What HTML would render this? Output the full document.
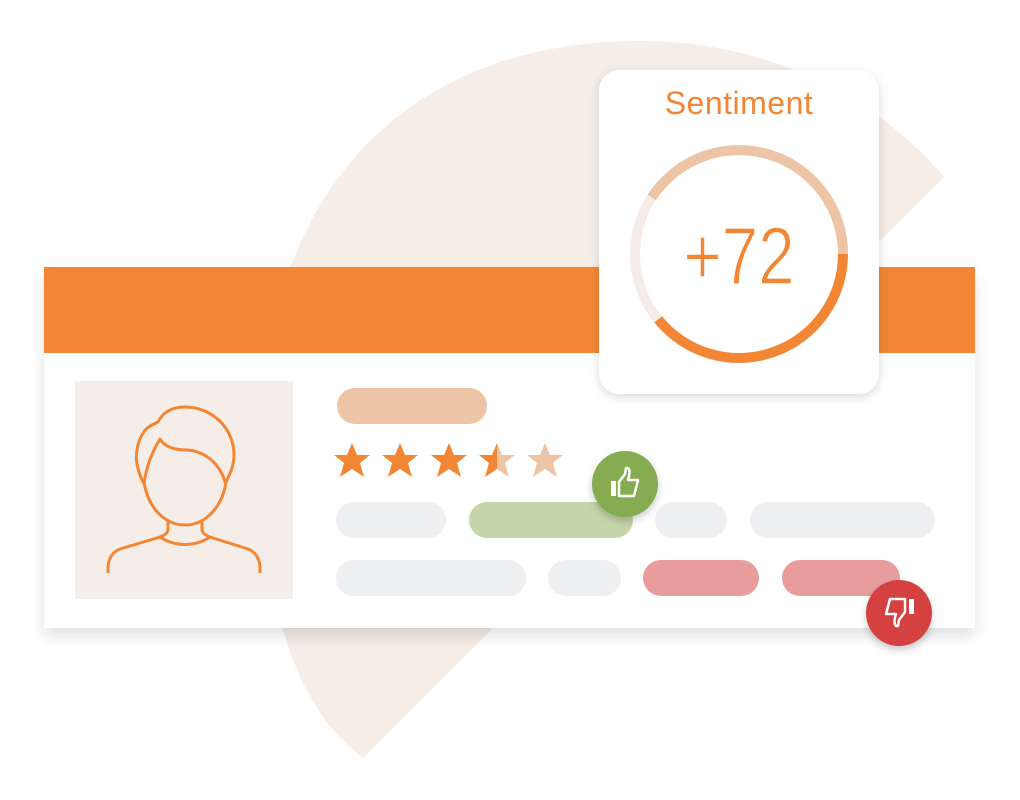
<!DOCTYPE html>
<html><head><meta charset="utf-8"><style>
html,body{margin:0;padding:0;background:#fff;width:1020px;height:800px;overflow:hidden;position:relative;font-family:"Liberation Sans",sans-serif}
.abs{position:absolute}
.pill{position:absolute;height:36px;border-radius:18px}
</style></head><body>
<svg class="abs" style="left:0;top:0" width="1020" height="800">
<path d="M363,758 L944,177 C870,90 760,41 640,41 C400,41 262,200 262,440 C262,620 300,710 363,758 Z" fill="#F6EDE7"/>
</svg>
<div class="abs" style="left:44px;top:267px;width:931px;height:361px;background:#fff;box-shadow:0 8px 14px rgba(0,0,0,0.12)"></div>
<div class="abs" style="left:44px;top:267px;width:931px;height:86px;background:#F28634"></div>
<div class="abs" style="left:75px;top:381px;width:218px;height:218px;background:#F5EDE7"></div>
<svg class="abs" style="left:0;top:0" width="1020" height="800" fill="none" stroke="#F28634" stroke-width="3" stroke-linecap="butt" stroke-linejoin="round">
<path d="M144,484 C138,472 135,460 137,450 C139,437 145,428 152,425 L158,422 C162,414 170,407 185,407 C212,407 234,428 234,455 C234,466 230,474 225,484"/>
<path d="M144,484 C146,468 152,452 160,439 C164,446 172,450 187,450 C205,451 220,464 225,482"/>
<path d="M144,482 C148,508 165,525 185,525 C205,525 222,508 226,482"/>
<path d="M168,521 L168,529 C168,533 165,535 160,537 L120,549 C112,552 108,560 108,568 L108,573"/>
<path d="M202,521 L202,529 C202,533 205,535 210,537 L248,549 C256,552 260,560 260,568 L260,573"/>
<path d="M160,537 C175,547 195,547 210,537"/>
</svg>
<div class="pill" style="left:337px;top:388px;width:150px;background:#EDC4A5"></div>
<svg class="abs" style="left:330px;top:440px" width="250" height="45">
<defs><path id="s" d="M0,-18 L5,-6 L18,-6 L8,2 L12,16 L0,8 L-12,16 L-8,2 L-18,-6 L-5,-6 Z"/>
<path id="hs" d="M0,-18 L0,8 L-12,16 L-8,2 L-18,-6 L-5,-6 Z"/></defs>
<use href="#s" x="22" y="21" fill="#F28634"/>
<use href="#s" x="70" y="21" fill="#F28634"/>
<use href="#s" x="119" y="21" fill="#F28634"/>
<use href="#s" x="167" y="21" fill="#EDC4A5"/>
<use href="#hs" x="167" y="21" fill="#F28634"/>
<use href="#s" x="215" y="21" fill="#EDC4A5"/>
</svg>
<div class="pill" style="left:336px;top:502px;width:110px;background:#EEEFF1"></div>
<div class="pill" style="left:469px;top:502px;width:164px;background:#C4D6A9"></div>
<div class="pill" style="left:655px;top:502px;width:72px;background:#EEEFF1"></div>
<div class="pill" style="left:750px;top:502px;width:185px;background:#EEEFF1"></div>
<div class="pill" style="left:336px;top:560px;width:190px;background:#EEEFF1"></div>
<div class="pill" style="left:548px;top:560px;width:73px;background:#EEEFF1"></div>
<div class="pill" style="left:643px;top:560px;width:116px;background:#E99C9C"></div>
<div class="pill" style="left:782px;top:560px;width:118px;background:#E99C9C"></div>
<div class="abs" style="left:592px;top:451px;width:66px;height:66px;border-radius:50%;background:#86AC52;box-shadow:0 4px 8px rgba(0,0,0,0.2)"></div>
<svg class="abs" style="left:592px;top:451px" width="66" height="66" fill="none" stroke="#fff" stroke-width="2.5" stroke-linejoin="round">
<rect x="19" y="30" width="5" height="15" fill="#fff" stroke="none"/>
<path d="M27,45 L27,31 L33,23 L34,17 L36,17 C38,19 38,23 36,29 L46,29 L42,45 Z"/>
</svg>
<div class="abs" style="left:866px;top:580px;width:66px;height:66px;border-radius:50%;background:#D54040;box-shadow:0 4px 8px rgba(0,0,0,0.2)"></div>
<svg class="abs" style="left:866px;top:580px" width="66" height="66" fill="none" stroke="#fff" stroke-width="2.5" stroke-linejoin="round">
<rect x="43" y="19" width="5" height="15" fill="#fff" stroke="none"/>
<path d="M39,19 L39,32 L33,40 L32,46 L30,46 C28,44 28,40 30,34 L20,34 L24,19 Z"/>
</svg>
<div class="abs" style="left:599px;top:70px;width:280px;height:324px;border-radius:20px;background:#fff;box-shadow:0 3px 10px rgba(0,0,0,0.15)"></div>
<div class="abs" style="left:599px;top:85px;width:280px;text-align:center;font-size:32px;color:#F28634;letter-spacing:0.5px">Sentiment</div>
<svg class="abs" style="left:599px;top:70px" width="280" height="324">
<g transform="translate(140,184)" fill="none" stroke-width="10">
<circle r="104" stroke="#F5ECE7"/>
<path d="M-87.2,-56.6 A104,104 0 0 1 104,0" stroke="#EDC4A5"/>
<path d="M104,0 A104,104 0 0 1 -80.8,65.4" stroke="#F28634"/>
</g>
<text x="140" y="214" text-anchor="middle" font-family="Liberation Sans" font-size="82" fill="#F28634" transform="translate(140,0) scale(0.8,1) translate(-140,0)" stroke="#fff" stroke-width="1.5">+72</text>
</svg>
</body></html>
